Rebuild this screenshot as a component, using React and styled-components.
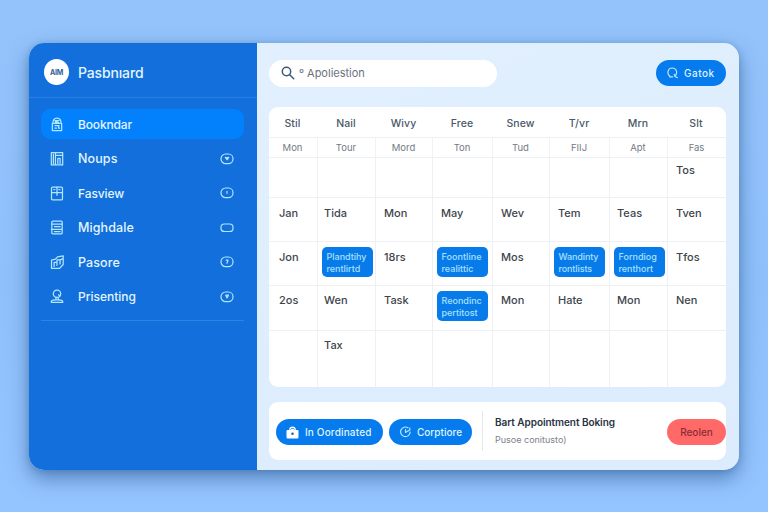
import React from "react";
import styled, { createGlobalStyle } from "styled-components";

const Global = createGlobalStyle`
  *, *::before, *::after { box-sizing: border-box; }
  body { margin: 0; background: #93c3fd; font-family: "Inter", "Liberation Sans", sans-serif; }
`;

const Page = styled.div`
  width: 768px;
  height: 512px;
  padding: 43px 29px 42px;
  overflow: hidden;
  background: linear-gradient(180deg, #94c3fb 0%, #90c0fb 55%, #95c5ff 100%);
`;

const Window = styled.div`
  width: 710px;
  height: 427px;
  display: flex;
  overflow: hidden;
  border-radius: 15px;
  background: linear-gradient(160deg, #e2f0fe, #dcecfd);
  box-shadow: 0 9px 20px rgba(31, 76, 132, 0.52), 0 1px 6px rgba(31, 76, 132, 0.25);
`;

const Sidebar = styled.aside`
  width: 228px;
  flex: none;
  background: #126fdc;
  color: #e3f6ff;
`;

const Brand = styled.div`
  height: 55px;
  padding: 4px 0 0 15px;
  display: flex;
  align-items: center;
  gap: 9px;
  border-bottom: 1px solid #267fe4;
  font-size: 14px;
  font-weight: 500;
  letter-spacing: ${(p) => p.$ls || 0}px;
`;

const Logo = styled.span`
  width: 25px;
  height: 26px;
  flex: none;
  border-radius: 50%;
  display: flex;
  align-items: center;
  justify-content: center;
  background: #fff;
  color: #2a6598;
  font-size: 7px;
  font-weight: 700;
  letter-spacing: -0.2px;
`;

const Nav = styled.nav`
  margin: 11px 13px 0 12px;
  padding-bottom: 8px;
  border-bottom: 1px solid #2b83e5;
  display: flex;
  flex-direction: column;
  gap: 4.6px;
`;

const NavItem = styled.div`
  height: 30px;
  padding: 0 10px 0 9px;
  display: flex;
  align-items: center;
  border-radius: 9px;
  background: ${(p) => (p.$active ? "#0381fc" : "transparent")};
  font-size: ${(p) => p.$size || 12}px;
  font-weight: 500;
  svg { flex: none; display: block; }
`;

const NavLabel = styled.span`
  flex: 1;
  margin-left: 14px;
  white-space: nowrap;
  letter-spacing: ${(p) => p.$ls || 0}px;
`;

const Stroke = styled.svg`
  fill: none;
  stroke: ${(p) => p.$color || "#b0e7ff"};
  stroke-width: ${(p) => p.$weight || 1.2};
  stroke-linecap: round;
  stroke-linejoin: round;
`;

const Main = styled.main`
  flex: 1;
  padding: 17px 13px 10px 12px;
  display: flex;
  flex-direction: column;
`;

const TopBar = styled.div`
  height: 27px;
  display: flex;
  justify-content: space-between;
`;

const Search = styled.div`
  width: 228px;
  padding: 0 0 1px 12px;
  display: flex;
  align-items: center;
  gap: 4px;
  border-radius: 14px;
  background: #fff;
  color: #6b7280;
  font-size: 11px;
`;

const Pill = styled.button`
  width: ${(p) => p.$w}px;
  height: 26px;
  flex: none;
  padding: 0 0 0 ${(p) => p.$pad || 0}px;
  display: flex;
  align-items: center;
  justify-content: ${(p) => (p.$pad ? "flex-start" : "center")};
  gap: ${(p) => p.$gap || 0}px;
  border: 0;
  border-radius: 13px;
  background: ${(p) => (p.$danger ? "#ff6a68" : "#067bee")};
  color: ${(p) => (p.$danger ? "#8c2b37" : "#dff5ff")};
  font: 500 10px "Inter", sans-serif;
  letter-spacing: ${(p) => p.$ls || 0}px;
  white-space: nowrap;
  svg { flex: none; }
`;

const Calendar = styled.section`
  margin-top: 20px;
  height: 280px;
  display: grid;
  grid-template-rows: 31px 20px 40px 44px 44px 45px 56px;
  border-radius: 9px;
  background: #fff;
  overflow: hidden;
`;

const Week = styled.div`
  display: grid;
  grid-template-columns: 49px 58px 57px 60px 57px 60px 58px 58px;
  border-bottom: ${(p) => (p.$last ? 0 : 1)}px solid #edf1f4;
`;

const HeadCell = styled.div`
  display: flex;
  align-items: center;
  justify-content: center;
  padding: ${(p) => (p.$sub ? "0 1px 1px 0" : "2px 2px 0 0")};
  color: ${(p) => (p.$sub ? "#737a83" : "#4a5968")};
  font-size: ${(p) => (p.$sub ? 9.5 : 10.5)}px;
  font-weight: ${(p) => (p.$sub ? 400 : 500)};
  letter-spacing: ${(p) => (p.$sub ? 0 : 0.1)}px;
  border-right: ${(p) => (p.$sub ? "1px solid #f0f2f5" : "0")};
  &:last-child { border-right: 0; }
`;

const Day = styled.div`
  min-width: 0;
  padding: ${(p) => (p.$event ? "5px 3px 0 4px" : `${p.$top}px 0 0 ${p.$left}px`)};
  border-right: 1px solid #edf1f5;
  color: #40454d;
  font-size: 11px;
  line-height: 14px;
  font-weight: 500;
  white-space: nowrap;
  &:last-child { border-right: 0; }
`;

const Event = styled.div`
  width: 51px;
  height: 30px;
  padding: 4px 0 0 4.5px;
  border-radius: 5px;
  background: #087bea;
  color: #a9e0ff;
  font-size: 9px;
  line-height: 11.5px;
  font-weight: 500;
  letter-spacing: ${(p) => p.$ls || 0}px;
`;

const Footer = styled.footer`
  margin-top: 15px;
  height: 58px;
  padding-left: 7px;
  display: flex;
  align-items: center;
  border-radius: 9px;
  background: #fff;
`;

const Actions = styled.div`
  display: flex;
  gap: 6px;
  padding-top: 2px;
`;

const Rule = styled.div`
  width: 1px;
  height: 40px;
  margin: 0 12px 0 10px;
  background: #e5e9ef;
`;

const Summary = styled.div`
  flex: 1;
  padding-bottom: 1px;
  white-space: nowrap;
`;

const Title = styled.div`
  color: #293342;
  font-size: 10px;
  line-height: 14px;
  font-weight: 600;
  letter-spacing: -0.05px;
`;

const Note = styled.div`
  margin-top: 4px;
  color: #7d8187;
  font-size: 9px;
  line-height: 14px;
`;

const navArt = {
  bag: <path d="M2.5 6.2C2.5 2.8 4.3 1 6.5 1s4 1.8 4 5.2M2 6.2h9v7H2zM4.5 3.5h4M5 6V4.2l3 1.2M4.5 8.3h4M4.5 10.8H6M8 8.5v2.3h1" />,
  columns: <path d="M1 1.5h4v12H1zM5 1.5h7v12H5zM3 3v9M5.5 4.3H12M7.3 12V7.2h2.2V12" />,
  windows: <><rect x="1.2" y="1" width="10.6" height="12.5" rx="1" /><path d="M6.5 1v8M1.2 6.5h10.6M3.5 3.5h1M8.3 3.5h1" /></>,
  list: <><rect x="1.5" y="1" width="10" height="12.5" rx="1" /><path d="M1.5 4h10M4 6.5h5.5M1 9h10M4 11.2h5.5" /></>,
  chart: <path d="M1.2 5 5 4l2-2.2L12.5.8v8.4L9 13H1.2zM3.7 11V7.2h2.8V10M6.5 7.2V4.7h3v4M9.5 4.7l2.5-1" />,
  person: <><circle cx="6.5" cy="4.6" r="3.6" /><path d="M5.5 7.8v1.7M7.7 8v1.5M1 13v-1.2c1.5-1.6 9.5-1.6 11 0V13zM8 5.5l1.2 1.5" /></>,
};

const badgeArt = {
  down: <path d="m5.3 4.4 1.7.5 1.7-.5L7.2 6.8z" />,
  dot: <path d="M7 4.6v1.6" />,
  tick: <path d="M6.2 4.2h1.8L6.9 7.2" />,
  ring: <path d="M5.7 4.1 7 6.9l1.5-2.8z" />,
};

const NAV = [
  { label: "Bookndar", icon: "bag", active: true, ls: -0.15 },
  { label: "Noups", icon: "columns", badge: "down", ls: 0.1, size: 12.5 },
  { label: "Fasview", icon: "windows", badge: "dot", ls: -0.1 },
  { label: "Mighdale", icon: "list", badge: "flat", ls: 0.1, size: 12.5 },
  { label: "Pasore", icon: "chart", badge: "tick", ls: 0.1, size: 12.5 },
  { label: "Prisenting", icon: "person", badge: "ring" },
];

const HEAD = ["Stil", "Nail", "Wivy", "Free", "Snew", "T/vr", "Mrn", "Slt"];
const SUB = ["Mon", "Tour", "Mord", "Ton", "Tud", "FIIJ", "Apt", "Fas"];
const LEFT = [10, 6, 8, 8, 8, 8, 7, 8];

const ev = (a, b, ls) => ({ a, b, ls });
const WEEKS = [
  { top: 5, days: ["", "", "", "", "", "", "", "Tos"] },
  { top: 8, days: ["Jan", "Tida", "Mon", "May", "Wev", "Tem", "Teas", "Tven"] },
  {
    top: 8,
    days: ["Jon", ev("Plandtihy", "rentlirtd", 0), "18rs", ev("Foontline", "realittic", 0.05), "Mos",
      ev("Wandinty", "rontlists", -0.1), ev("Forndiog", "renthort", 0), "Tfos"],
  },
  { top: 7, days: ["2os", "Wen", "Task", ev("Reondinc", "pertitost", 0), "Mon", "Hate", "Mon", "Nen"] },
  { top: 7, days: ["", "Tax", "", "", "", "", "", ""] },
];

function Badge({ kind }) {
  return kind === "flat" ? (
    <Stroke width="14" height="12" viewBox="0 0 14 12"><rect x="1" y="2" width="12" height="7.5" rx="3.3" /></Stroke>
  ) : (
    <Stroke width="14" height="12" viewBox="0 0 14 12">
      <rect x="1" y="1" width="12" height="9.6" rx="4.6" />
      {badgeArt[kind]}
    </Stroke>
  );
}

export default function App() {
  return (
    <Page>
      <Global />
      <Window>
        <Sidebar>
          <Brand $ls={-0.15}><Logo>AIM</Logo>Pasbnıard</Brand>
          <Nav>
            {NAV.map((n) => (
              <NavItem key={n.label} $active={n.active} $size={n.size}>
                <Stroke width="14" height="15" viewBox="0 0 13 14.5">{navArt[n.icon]}</Stroke>
                <NavLabel $ls={n.ls}>{n.label}</NavLabel>
                {n.badge && <Badge kind={n.badge} />}
              </NavItem>
            ))}
          </Nav>
        </Sidebar>
        <Main>
          <TopBar>
            <Search>
              <Stroke width="14" height="14" viewBox="0 0 14 14" $color="#3d5a7b" $weight={1.5}>
                <circle cx="5.5" cy="5.5" r="4.2" /><path d="m8.7 8.7 4 4" />
              </Stroke>
              <span>º Apoliestion</span>
            </Search>
            <Pill $w={70} $pad={11} $gap={6} $ls={0.5}>
              <Stroke width="11" height="12" viewBox="0 0 11 12" $color="#b5e7ff" $weight={1.2}>
                <path d="M3.2 9.4C-.5 7.2.5 1 5.2 1s5.7 5.6 2.6 8.3M2.5 9.8h3.2M7.2 7.5l1.3 2.3 1.8.8" />
              </Stroke>
              Gatok
            </Pill>
          </TopBar>
          <Calendar>
            <Week>{HEAD.map((t) => <HeadCell key={t}>{t}</HeadCell>)}</Week>
            <Week>{SUB.map((t) => <HeadCell key={t} $sub>{t}</HeadCell>)}</Week>
            {WEEKS.map((w, r) => (
              <Week key={r} $last={r === WEEKS.length - 1}>
                {w.days.map((d, c) => (
                  <Day key={c} $event={!!d.a} $top={w.top} $left={LEFT[c]}>
                    {d.a ? <Event $ls={d.ls}><div>{d.a}</div><div>{d.b}</div></Event> : d}
                  </Day>
                ))}
              </Week>
            ))}
          </Calendar>
          <Footer>
            <Actions>
              <Pill $w={107} $pad={10} $gap={6} $ls={0.15}>
                <svg width="13" height="13" viewBox="0 0 13 13">
                  <path d="M3.2 4V3.3C3.2 1.7 4.6.5 6.5.5s3.3 1.2 3.3 2.8V4h1.6q1.1 0 1.1 1v6.3q0 1.2-1.2 1.2H1.7Q.5 12.5.5 11.3V5q0-1 1.1-1z" fill="#fff" />
                  <path d="M4.5 3.5c.6-1.4 3.4-1.4 4 0" fill="none" stroke="#067bee" />
                  <circle cx="6.5" cy="7.8" r="1.3" fill="#2c5f91" />
                </svg>
                In Oordinated
              </Pill>
              <Pill $w={83} $pad={11} $gap={6}>
                <Stroke width="11" height="12" viewBox="0 0 11 12" $color="#b5e7ff">
                  <path d="M8 1.8A4.8 4.8 0 1 0 10.2 6M5.5 3.5v3L9.8 4M9.8 4V2" />
                </Stroke>
                Corptiore
              </Pill>
            </Actions>
            <Rule />
            <Summary>
              <Title>Bart Appointment Boking</Title>
              <Note>Pusoe conitusto)</Note>
            </Summary>
            <Actions><Pill $w={59} $danger>Reolen</Pill></Actions>
          </Footer>
        </Main>
      </Window>
    </Page>
  );
}
